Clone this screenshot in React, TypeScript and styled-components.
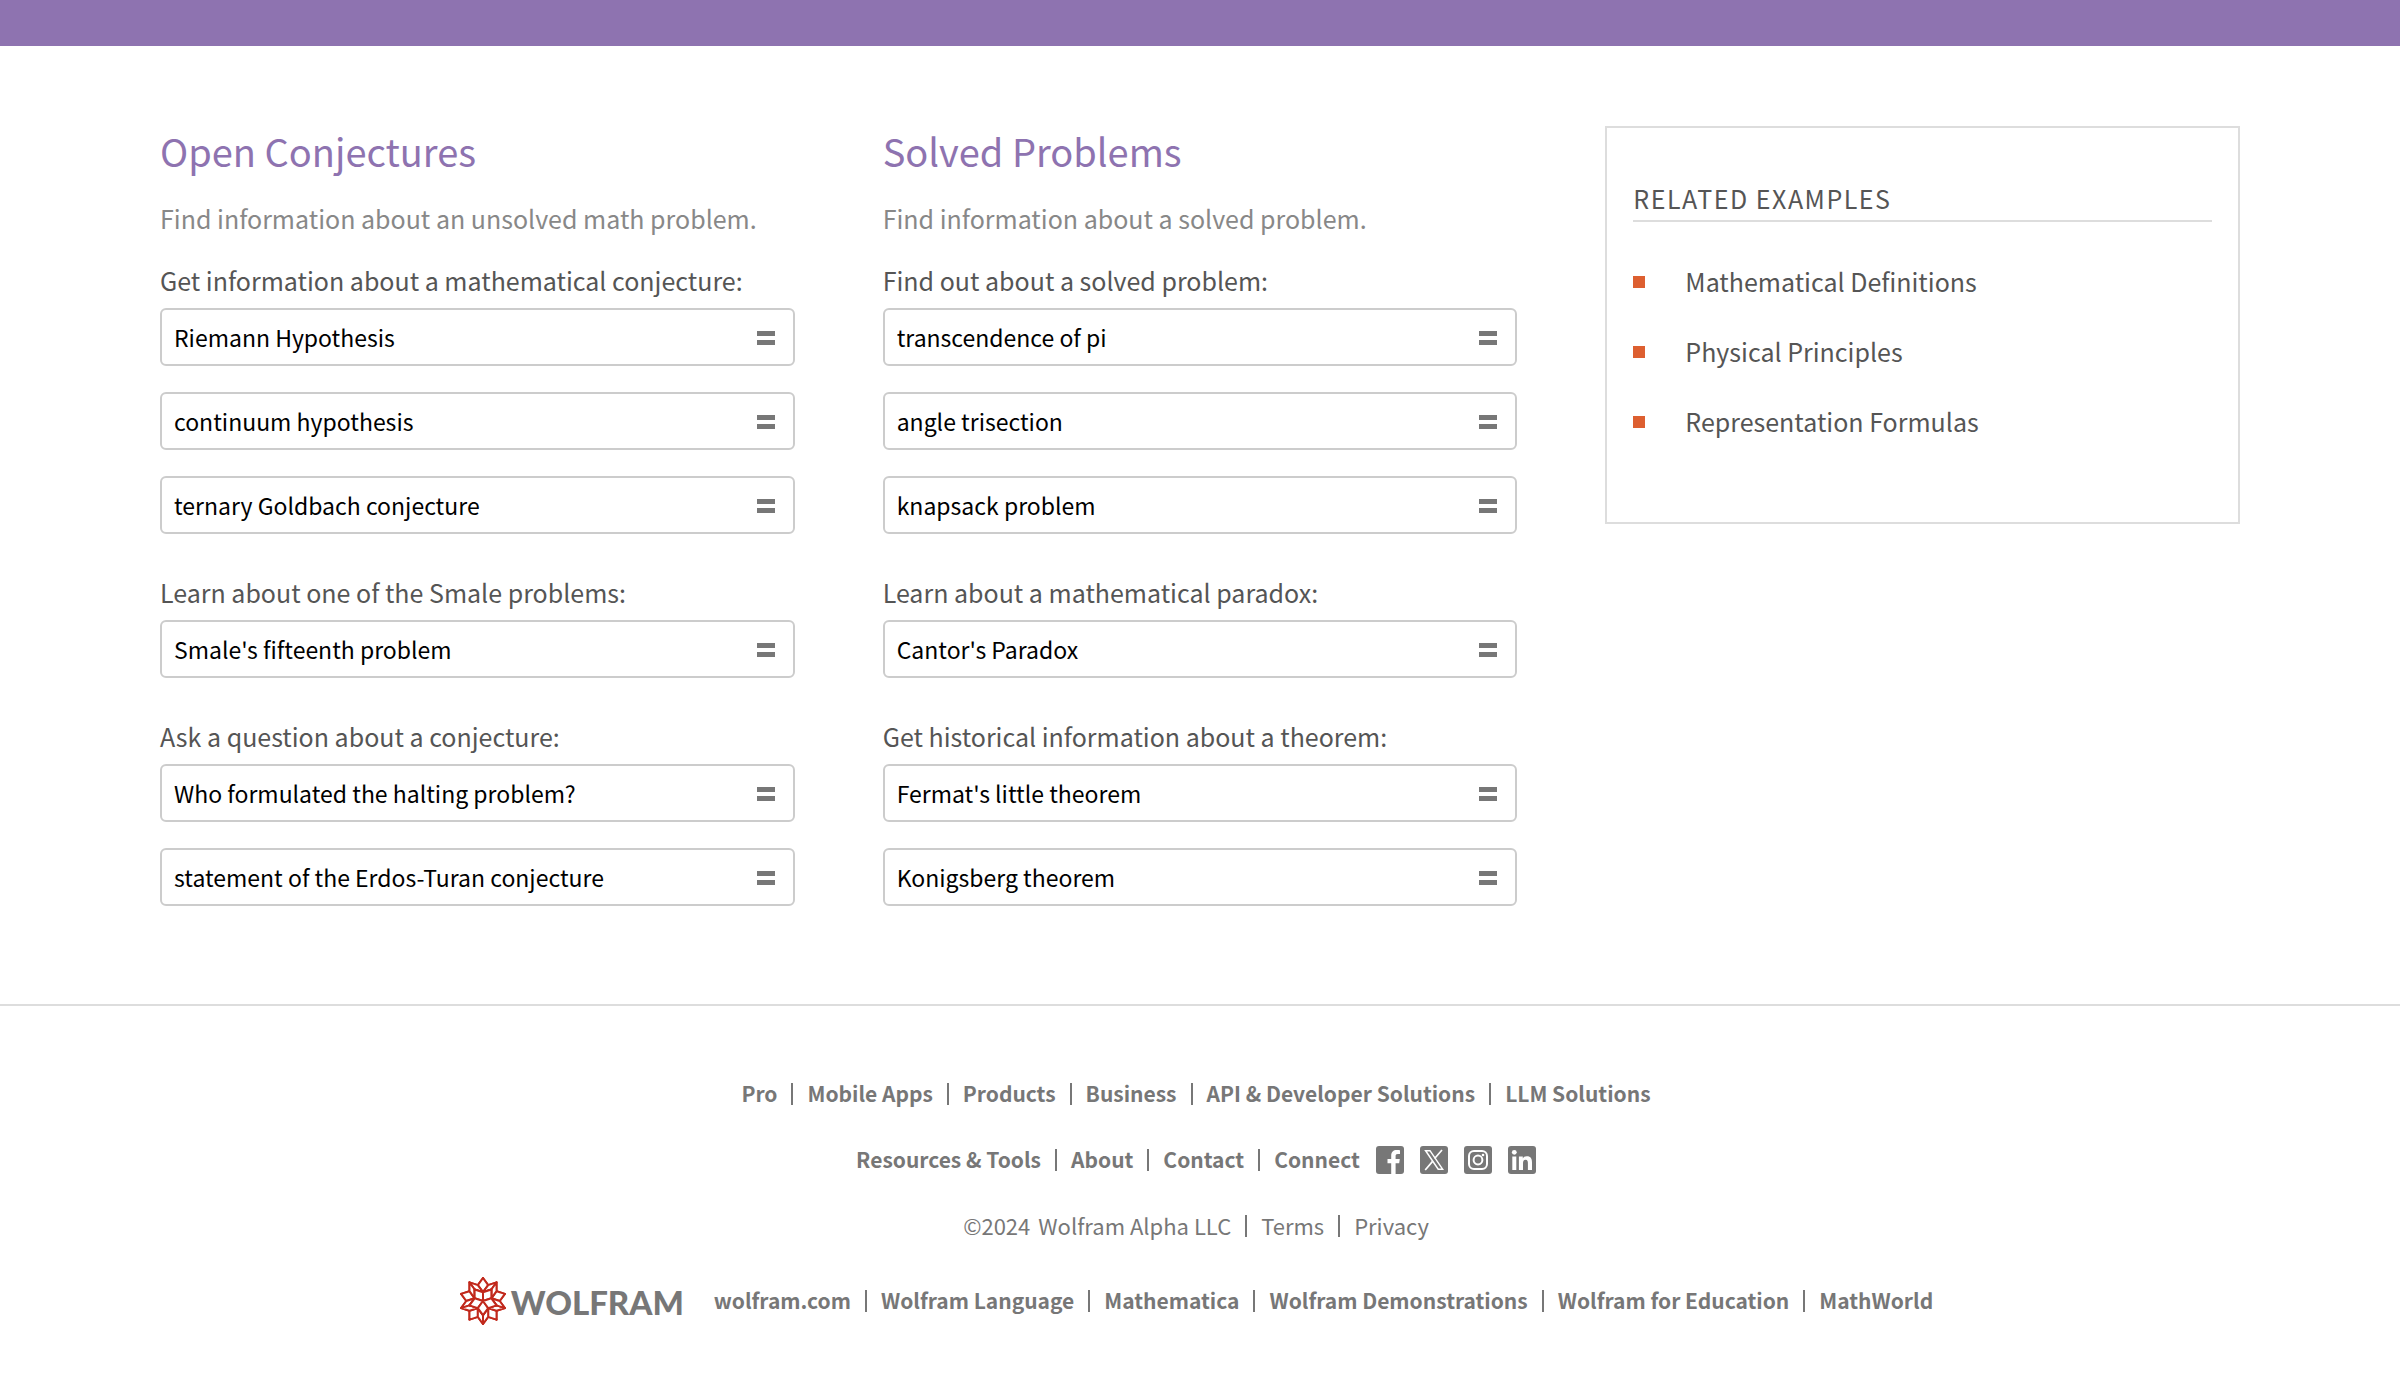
import React, { useId } from "react";
import styled, { createGlobalStyle } from "styled-components";

const GlobalStyle = createGlobalStyle`
  *, *::before, *::after { box-sizing: border-box; }
  body {
    margin: 0;
    background: #fff;
    color: #555;
    font-family: "Noto Sans CJK SC", "Noto Sans", sans-serif;
    font-size: 25px;
    line-height: 40px;
  }
  a { color: inherit; text-decoration: none; }
  a:hover { color: #dd5f30; }
`;

const TopBand = styled.header`
  height: 46px;
  background: #8e73b0;
`;

const Main = styled.main`
  display: grid;
  grid-template-columns: repeat(3, minmax(0, 1fr));
  align-items: start;
  gap: 88px;
  padding: 80px 160px 98px;
`;

const Title = styled.h2`
  margin: 0 0 23px;
  padding-top: 1px;
  color: #8e73b0;
  font-size: 38px;
  font-weight: 400;
  line-height: 48px;
`;

const Intro = styled.p`
  margin: 0 0 22px;
  color: #888;
`;

const Groups = styled.div`
  display: flex;
  flex-direction: column;
  gap: 38px;
`;

const Caption = styled.label`
  display: block;
  margin-bottom: 8px;
`;

const Queries = styled.div`
  display: flex;
  flex-direction: column;
  gap: 26px;
`;

const QueryBox = styled.form`
  display: flex;
  height: 58px;
  border: 2px solid #ccc;
  border-radius: 6px;
`;

const QueryInput = styled.input`
  flex: 1;
  min-width: 0;
  padding: 0 12px;
  border: 0;
  outline: 0;
  background: transparent;
  color: #000;
  font: inherit;
  font-size: 23px;
`;

const ComputeButton = styled.button`
  display: flex;
  flex-direction: column;
  align-items: center;
  justify-content: center;
  gap: 4px;
  width: 54px;
  padding: 2px 0 0;
  border: 0;
  background: transparent;
  cursor: pointer;
`;

const Bar = styled.span`
  width: 18px;
  height: 5px;
  background: #777;
`;

const Related = styled.aside`
  padding: 50px 26px 81px;
  border: 2px solid #ddd;
`;

const RelatedTitle = styled.h3`
  margin: 0 0 39px;
  padding-bottom: 2px;
  border-bottom: 2px solid #ddd;
  font-size: 25px;
  font-weight: 400;
  letter-spacing: 0.06em;
  text-transform: uppercase;
`;

const RelatedList = styled.ul`
  display: flex;
  flex-direction: column;
  gap: 30px;
  margin: 0;
  padding: 0;
  list-style: none;
`;

const RelatedItem = styled.li`
  display: flex;
  align-items: center;
  gap: 40px;

  &::before {
    content: "";
    width: 12px;
    height: 12px;
    margin-top: 2px;
    background: #dd5f30;
  }
`;

const Footer = styled.footer`
  display: flex;
  flex-direction: column;
  align-items: center;
  padding: 54px 8px 64px 0;
  border-top: 2px solid #ddd;
  color: #777;
`;

const FooterRow = styled.div<{ $plain?: boolean; $tall?: boolean }>`
  display: flex;
  align-items: center;
  min-height: ${(p) => (p.$tall ? 84 : 66)}px;
  font-size: ${(p) => (p.$plain ? 22 : 21)}px;
  font-weight: ${(p) => (p.$plain ? 400 : 700)};
`;

const LinkList = styled.ul`
  display: flex;
  align-items: center;
  margin: 0;
  padding: 0;
  list-style: none;
`;

const LinkItem = styled.li`
  display: flex;
  align-items: center;

  & + &::before {
    content: "";
    width: 2px;
    height: 22px;
    margin: 2px 14px 0;
    background: #777;
  }
`;

const Year = styled.span`
  margin-right: 8px;
`;

const Social = styled.div`
  display: flex;
  gap: 16px;
  margin: 2px 0 0 16px;

  a, svg { display: block; }
`;

const Brand = styled.a`
  display: flex;
  align-items: center;
  gap: 4px;
  margin-right: 30px;
  padding-top: 2px;
`;

const Wordmark = styled.span`
  padding-top: 2px;
  font-family: Lato, "Open Sans", sans-serif;
  font-size: 33px;
  font-weight: 900;
`;

type Group = { caption: string; queries: string[] };

const openGroups: Group[] = [
  {
    caption: "Get information about a mathematical conjecture:",
    queries: ["Riemann Hypothesis", "continuum hypothesis", "ternary Goldbach conjecture"],
  },
  { caption: "Learn about one of the Smale problems:", queries: ["Smale's fifteenth problem"] },
  {
    caption: "Ask a question about a conjecture:",
    queries: ["Who formulated the halting problem?", "statement of the Erdos-Turan conjecture"],
  },
];

const solvedGroups: Group[] = [
  {
    caption: "Find out about a solved problem:",
    queries: ["transcendence of pi", "angle trisection", "knapsack problem"],
  },
  { caption: "Learn about a mathematical paradox:", queries: ["Cantor's Paradox"] },
  {
    caption: "Get historical information about a theorem:",
    queries: ["Fermat's little theorem", "Konigsberg theorem"],
  },
];

function ExampleGroup({ caption, queries }: Group) {
  const id = useId();
  return (
    <section>
      <Caption id={`${id}-caption`} htmlFor={`${id}-0`}>{caption}</Caption>
      <Queries>
        {queries.map((query, i) => (
          <QueryBox key={query} onSubmit={(e) => e.preventDefault()}>
            <QueryInput
              id={`${id}-${i}`}
              type="text"
              defaultValue={query}
              aria-labelledby={`${id}-caption`}
            />
            <ComputeButton type="submit" aria-label="Compute">
              <Bar />
              <Bar />
            </ComputeButton>
          </QueryBox>
        ))}
      </Queries>
    </section>
  );
}

function ExampleColumn({ title, intro, groups }: { title: string; intro: string; groups: Group[] }) {
  return (
    <section>
      <Title>{title}</Title>
      <Intro>{intro}</Intro>
      <Groups>
        {groups.map((g) => <ExampleGroup key={g.caption} {...g} />)}
      </Groups>
    </section>
  );
}

// Rhombic hexecontahedron seen down a five-fold axis. Each triple of
// neighbouring icosahedron vertices (a, b, c) spans a golden rhombohedron,
// whose three outer faces share the tip a + b + c.
type Vec = [number, number, number];
const add = (...vs: Vec[]): Vec =>
  vs.reduce((s, v) => [s[0] + v[0], s[1] + v[1], s[2] + v[2]] as Vec, [0, 0, 0] as Vec);
const dot = (a: Vec, b: Vec) => a[0] * b[0] + a[1] * b[1] + a[2] * b[2];

function spikeyFaces(radius: number, cx: number, cy: number): string[] {
  const z = 1 / Math.sqrt(5);
  const r = 2 * z;
  const verts: Vec[] = [[0, 0, 1], [0, 0, -1]];
  for (let k = 0; k < 5; k++) {
    const up = ((90 + 72 * k) * Math.PI) / 180;
    const down = ((126 + 72 * k) * Math.PI) / 180;
    verts.push([r * Math.cos(up), r * Math.sin(up), z]);
    verts.push([r * Math.cos(down), r * Math.sin(down), -z]);
  }
  const near = (a: Vec, b: Vec) => dot(a, b) > 0.4;
  const faces: Vec[][] = [];
  let reach = 0;
  for (let i = 0; i < 12; i++)
    for (let j = i + 1; j < 12; j++)
      for (let k = j + 1; k < 12; k++) {
        const [a, b, c] = [verts[i], verts[j], verts[k]];
        if (!near(a, b) || !near(b, c) || !near(a, c)) continue;
        const tip = add(a, b, c);
        reach = Math.max(reach, Math.hypot(tip[0], tip[1]));
        faces.push([a, add(a, b), tip, add(a, c)]);
        faces.push([b, add(a, b), tip, add(b, c)]);
        faces.push([c, add(a, c), tip, add(b, c)]);
      }
  const scale = radius / reach;
  return faces
    .map((f) => ({ f, depth: add(...f)[2] }))
    .sort((p, q) => p.depth - q.depth)
    .map(({ f }) =>
      f.map((v) => `${(cx + v[0] * scale).toFixed(2)},${(cy - v[1] * scale).toFixed(2)}`).join(" ")
    );
}

const spikey = spikeyFaces(23, 24, 26);

function Spikey() {
  return (
    <svg width="48" height="52" viewBox="0 0 48 52" aria-hidden="true">
      <g fill="#fff" stroke="#c1291c" strokeWidth="2" strokeLinejoin="round">
        {spikey.map((points, i) => <polygon key={i} points={points} />)}
      </g>
    </svg>
  );
}

const Tile = ({ children }: { children: React.ReactNode }) => (
  <svg width="28" height="28" viewBox="0 0 28 28" aria-hidden="true">
    <rect width="28" height="28" rx="3" fill="#777" />
    {children}
  </svg>
);

function FacebookIcon() {
  return (
    <Tile>
      <path
        fill="#fff"
        d="M15.2 28V17.2h-3.7v-4.1h3.7V9.8c0-3.700 2.200-5.700 5.500-5.700 1.600 0 2.900.1 3.300.2v3.700h-2.200c-1.800 0-2.200.9-2.200 2.100v3h4.200l-.6 4.100h-3.600V28z"
      />
    </Tile>
  );
}

function XIcon() {
  return (
    <Tile>
      <path fill="none" stroke="#fff" strokeWidth="1.5" d="M5.6 4.7h4.4l12.6 18.5h-4.4z" />
      <path stroke="#fff" strokeWidth="1.7" d="M22 4l-7.4 8.5M12.6 15.4L5.2 24" />
    </Tile>
  );
}

function InstagramIcon() {
  return (
    <Tile>
      <g fill="none" stroke="#fff" strokeWidth="2">
        <rect x="5" y="5" width="18" height="18" rx="5" />
        <circle cx="14" cy="14" r="4.4" />
      </g>
      <circle cx="19" cy="9" r="1.3" fill="#fff" />
    </Tile>
  );
}

function LinkedInIcon() {
  return (
    <Tile>
      <circle cx="6.3" cy="6.3" r="2.4" fill="#fff" />
      <rect x="4.3" y="10.5" width="4" height="13.5" fill="#fff" />
      <path
        fill="#fff"
        d="M10.9 10.5h3.900v1.900c.6-1.100 2-2.200 4-2.200 4.200 0 5.200 2.700 5.200 6.400V24h-4.100v-6.600c0-1.700-.2-3.600-2.300-3.600s-2.600 1.700-2.600 3.500V24h-4.100z"
      />
    </Tile>
  );
}

const products = ["Pro", "Mobile Apps", "Products", "Business", "API & Developer Solutions", "LLM Solutions"];
const company = ["Resources & Tools", "About", "Contact", "Connect"];
const legal = ["Wolfram Alpha LLC", "Terms", "Privacy"];
const sites = [
  "wolfram.com",
  "Wolfram Language",
  "Mathematica",
  "Wolfram Demonstrations",
  "Wolfram for Education",
  "MathWorld",
];
const related = ["Mathematical Definitions", "Physical Principles", "Representation Formulas"];

const Links = ({ items }: { items: string[] }) => (
  <LinkList>
    {items.map((item) => (
      <LinkItem key={item}><a href="#">{item}</a></LinkItem>
    ))}
  </LinkList>
);

export default function App() {
  return (
    <>
      <GlobalStyle />
      <TopBand />
      <Main>
        <ExampleColumn
          title="Open Conjectures"
          intro="Find information about an unsolved math problem."
          groups={openGroups}
        />
        <ExampleColumn
          title="Solved Problems"
          intro="Find information about a solved problem."
          groups={solvedGroups}
        />
        <Related>
          <RelatedTitle>Related Examples</RelatedTitle>
          <RelatedList>
            {related.map((item) => (
              <RelatedItem key={item}><a href="#">{item}</a></RelatedItem>
            ))}
          </RelatedList>
        </Related>
      </Main>
      <Footer>
        <FooterRow><Links items={products} /></FooterRow>
        <FooterRow>
          <Links items={company} />
          <Social>
            <a href="#" aria-label="Facebook"><FacebookIcon /></a>
            <a href="#" aria-label="X"><XIcon /></a>
            <a href="#" aria-label="Instagram"><InstagramIcon /></a>
            <a href="#" aria-label="LinkedIn"><LinkedInIcon /></a>
          </Social>
        </FooterRow>
        <FooterRow $plain>
          <Year>©2024</Year>
          <Links items={legal} />
        </FooterRow>
        <FooterRow $tall>
          <Brand href="#">
            <Spikey />
            <Wordmark>WOLFRAM</Wordmark>
          </Brand>
          <Links items={sites} />
        </FooterRow>
      </Footer>
    </>
  );
}
